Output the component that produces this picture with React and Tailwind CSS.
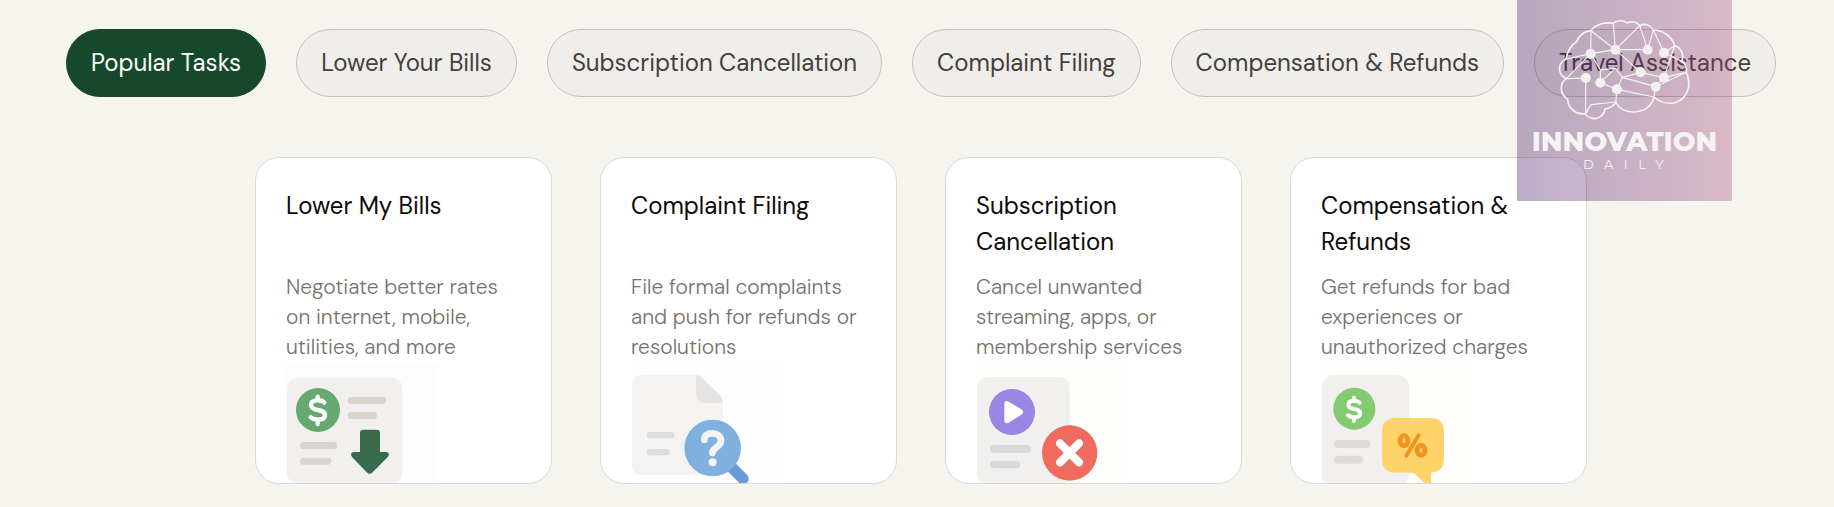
const tabs = [
  "Popular Tasks",
  "Lower Your Bills",
  "Subscription Cancellation",
  "Complaint Filing",
  "Compensation & Refunds",
  "Travel Assistance",
];

const DollarSign = ({ x, y, scale, width }) => (
  <g
    transform={`translate(${x} ${y}) scale(${scale})`}
    fill="none"
    stroke="#fff"
    strokeWidth={width}
    strokeLinecap="round"
    strokeLinejoin="round"
  >
    <path d="M20 -22C14 -29 4 -30 -4 -29C-14 -28 -20 -23 -20 -15C-20 -4 -9 -2 0 0C11 2 22 4 22 15C22 25 13 29 2 29C-7 29 -16 27 -21 22" />
    <path d="M0 -40V-30M0 30V42" />
  </g>
);

const BillsArt = () => (
  <svg viewBox="48 21 456 363" className="w-[152px] h-[121px]" aria-hidden="true">
    <rect x="48" y="24" width="456" height="360" fill="#fdfdfd" />
    <rect x="51" y="68" width="346" height="318" rx="32" fill="#f2f0ef" />
    <circle cx="144" cy="165" r="66" fill="#66a870" />
    <DollarSign x={143} y={165} scale={1} width={13} />
    <g fill="#d9d3ce">
      <rect x="233" y="126" width="115" height="21" rx="10.5" />
      <rect x="233" y="171" width="88" height="21" rx="10.5" />
      <rect x="90" y="261" width="111" height="21" rx="10.5" />
      <rect x="90" y="308" width="94" height="21" rx="10.5" />
    </g>
    <path
      d="M280 224H320Q330 224 330 234V291H348Q362 293 354 305L308 352Q299 361 290 352L246 306Q238 293 252 291H270V234Q270 224 280 224Z"
      fill="#366b4b"
    />
  </svg>
);

const ComplaintArt = () => (
  <svg viewBox="63 21 456 363" className="w-[152px] h-[121px]" aria-hidden="true">
    <rect x="63" y="24" width="456" height="360" fill="#fefefe" />
    <path
      d="M99 60H256Q266 60 275 69L327 118Q339 129 339 142V360H99Q66 360 66 327V93Q66 60 99 60Z"
      fill="#f4f3f1"
    />
    <path d="M258 60Q267 60 276 69L327 118Q338 128 338 144H292Q258 144 258 110Z" fill="#e5e4e3" />
    <g fill="#dcdcdc">
      <rect x="110" y="231" width="83" height="19" rx="9.5" />
      <rect x="110" y="282" width="70" height="19" rx="9.5" />
    </g>
    <path d="M360 332L399 371" stroke="#6a9ad8" strokeWidth="34" strokeLinecap="round" />
    <circle cx="308" cy="279" r="85" fill="#80b0de" />
    <path
      d="M283 254C283 240 293 235 306 235C322 235 333 244 333 257C333 276 308 277 307 294"
      fill="none"
      stroke="#f5f4f2"
      strokeWidth="20"
      strokeLinecap="round"
    />
    <circle cx="308" cy="322" r="12" fill="#f5f4f2" />
  </svg>
);

const CancelArt = () => (
  <svg viewBox="48 21 456 363" className="w-[152px] h-[121px]" aria-hidden="true">
    <rect x="48" y="24" width="456" height="360" fill="#fefefd" />
    <rect x="51" y="66" width="278" height="322" rx="32" fill="#f1f0ef" />
    <circle cx="156" cy="171" r="69" fill="#9985e3" />
    <path
      d="M133 148Q133 134 146 140L184 163Q195 171 184 179L146 203Q133 209 133 195Z"
      fill="#fff"
    />
    <g fill="#dad9d9">
      <rect x="90" y="270" width="123" height="24" rx="12" />
      <rect x="90" y="317" width="91" height="23" rx="11.5" />
    </g>
    <circle cx="329" cy="294" r="83" fill="#ef6b60" />
    <path d="M300 265L357 322M357 265L300 322" stroke="#fff" strokeWidth="24" strokeLinecap="round" />
  </svg>
);

const RefundsArt = () => (
  <svg viewBox="63 21 456 363" className="w-[152px] h-[121px]" aria-hidden="true">
    <rect x="63" y="24" width="456" height="360" fill="#fefefd" />
    <rect x="66" y="61" width="261" height="330" rx="32" fill="#f2f0ee" />
    <circle cx="163" cy="161" r="63" fill="#83ca71" />
    <DollarSign x={162} y={162} scale={0.85} width={14} />
    <g fill="#dedbd9">
      <rect x="102" y="255" width="109" height="24" rx="12" />
      <rect x="102" y="302" width="87" height="24" rx="12" />
    </g>
    <path
      d="M287 189H391Q432 189 432 230V313Q432 350 393 353V392H382L340 353H287Q246 353 246 312V230Q246 189 287 189Z"
      fill="#fed36a"
    />
    <g fill="none" stroke="#f0941f" strokeLinecap="round">
      <ellipse cx="312" cy="257" rx="12" ry="15" strokeWidth="14" />
      <ellipse cx="363" cy="286" rx="12" ry="15" strokeWidth="14" />
      <path d="M356 241L319 302" strokeWidth="12" />
    </g>
  </svg>
);

const cards = [
  {
    title: "Lower My Bills",
    text: "Negotiate better rates on internet, mobile, utilities, and more",
    Art: BillsArt,
  },
  {
    title: "Complaint Filing",
    text: "File formal complaints and push for refunds or resolutions",
    Art: ComplaintArt,
  },
  {
    title: "Subscription Cancellation",
    text: "Cancel unwanted streaming, apps, or membership services",
    Art: CancelArt,
  },
  {
    title: "Compensation & Refunds",
    text: "Get refunds for bad experiences or unauthorized charges",
    Art: RefundsArt,
  },
];

const nodes = [
  [331, 161],
  [405, 149],
  [502, 149],
  [551, 158],
  [481, 217],
  [551, 233],
  [526, 260],
  [316, 234],
  [360, 248],
  [410, 268],
];

const Brain = () => (
  <svg viewBox="230 54 408 312" className="w-[136px] h-[104px]" aria-hidden="true">
    <g fill="none" stroke="#f6f4f2" strokeLinecap="round" strokeLinejoin="round">
      <path
        strokeWidth="5"
        d="M258 236C232 225 230 190 257 177C260 155 275 132 288 126C298 103 314 93 332 92C345 73 375 65 399 70C410 60 430 60 440 69C455 62 470 66 478 77C495 68 512 76 519 90C545 90 575 108 583 137C604 144 612 165 604 184C614 190 622 205 618 217C635 255 622 300 580 309C556 312 535 305 521 291C514 320 490 336 458 336C435 335 415 325 406 306C400 320 388 325 374 327C370 350 350 358 338 355C325 353 318 347 313 341C288 345 262 325 262 298C236 280 238 250 258 236Z"
      />
      <path
        strokeWidth="3.5"
        d="M332 92L331 161L405 149L332 92M399 70L405 149L478 77L502 149L519 90L551 158L583 137M405 149H502M405 149L481 217M257 177L331 161M258 236L316 234V341L332 314L406 306L410 268L360 248V210M258 236L331 161M405 205L426 232L410 268M405 205L360 248M410 268L521 291L526 260L426 232L481 217L551 233M526 260L551 233L618 217L526 260M583 137L551 233M331 161L360 210L405 205M551 158L604 184"
      />
    </g>
    {nodes.map(([x, y]) => (
      <circle key={`${x}-${y}`} cx={x} cy={y} r="15" fill="#f3f1ef" />
    ))}
  </svg>
);

const Watermark = () => (
  <div className="absolute top-0 right-[102px] w-[215px] h-[201px] pt-[18px] flex flex-col items-center bg-linear-to-r from-[#39065a]/33 to-[#a34076]/33 text-[#f6f4f2] font-['Montserrat','Inter',sans-serif] pointer-events-none">
    <Brain />
    <p className="mt-1 text-[27px] leading-8 font-extrabold">INNOVATION</p>
    <p className="pl-2 text-[13px] leading-3 tracking-[0.8em]">DAILY</p>
  </div>
);

const TaskCard = ({ title, text, Art }) => (
  <a
    href="#"
    className="w-[297px] overflow-hidden rounded-3xl border border-[#d9d8d4] bg-white px-[30px] pt-[30px]"
  >
    <h3 className="min-h-[72px] text-2xl leading-9 text-stone-950">{title}</h3>
    <p className="mt-3 text-[21px] leading-[30px] font-light text-stone-500">{text}</p>
    <Art />
  </a>
);

const App = () => {
  return (
    <div className="relative min-h-screen overflow-hidden bg-[#f5f4ef] font-['DM_Sans','Inter',sans-serif]">
      <div className="flex justify-center gap-[30px] pt-[29px] pl-2">
        {tabs.map((tab, index) => (
          <button
            key={tab}
            type="button"
            className={
              index === 0
                ? "h-[68px] shrink-0 whitespace-nowrap rounded-full border border-[#16482b] bg-[#16482b] px-6 text-2xl text-white"
                : "h-[68px] shrink-0 whitespace-nowrap rounded-full border border-[#c4c2be] bg-[#f0eeea] px-6 text-2xl text-stone-700"
            }
          >
            {tab}
          </button>
        ))}
      </div>
      <div className="flex justify-center gap-12 pt-[60px] pb-6 pl-2">
        {cards.map((card) => (
          <TaskCard key={card.title} {...card} />
        ))}
      </div>
      <Watermark />
    </div>
  );
};

export default App;
